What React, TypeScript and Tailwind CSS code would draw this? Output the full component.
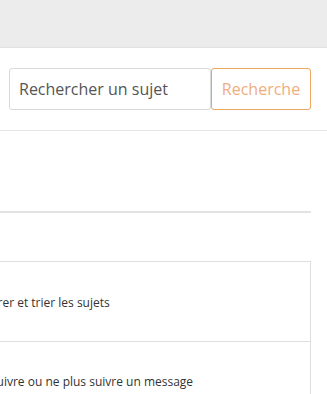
import React from 'react';

const topics = [
  { label: 'Filtrer et trier les sujets', offset: '-ml-[19px]' },
  { label: 'Suivre ou ne plus suivre un message', offset: '-ml-[10px]' },
];

export default function App() {
  return (
    <div
      className="w-[327px] h-[394px] overflow-hidden bg-white text-[#333]"
      style={{ fontFamily: '"Open Sans", sans-serif' }}
    >
      <div className="h-[48px] bg-[#ececec] border-b border-[#e2e2e2]" />
      <div className="flex h-[83px] items-center pl-[9px] border-b border-[#e5e5e5]">
        <input
          className="h-[42px] w-[202px] rounded-[3px] border border-[#d9d9d9] px-[9px] text-[16px] text-[#555] placeholder:text-[#555] outline-none"
          placeholder="Rechercher un sujet"
        />
        <button className="h-[42px] w-[100px] rounded-[3px] border border-[#e9a760] bg-white text-[16px] text-[#f0ad7f]">
          Recherche
        </button>
      </div>
      <div className="h-[82px] w-[311px] border-b-2 border-[#e2e2e2]" />
      <div className="pt-[48px]">
        <div className="w-[311px] border border-l-0 border-[#dedede]">
          {topics.map((t, i) => (
            <div
              key={t.label}
              className={`h-[79px] flex items-center pt-[2px] text-[12px] ${i > 0 ? 'border-t border-[#dedede]' : ''}`}
            >
              <span className={t.offset}>{t.label}</span>
            </div>
          ))}
        </div>
      </div>
    </div>
  );
}
